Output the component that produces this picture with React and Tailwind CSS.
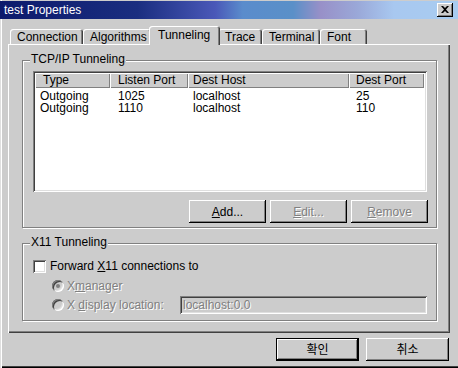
import React from 'react';

const raised = 'shadow-[inset_-1px_-1px_#000,inset_1px_1px_#fff,inset_-2px_-2px_#808080]';
const sunken = 'shadow-[inset_1px_1px_#808080,inset_-1px_-1px_#fff,inset_2px_2px_#404040,inset_-2px_-2px_#dfdfdf]';
const engraved = 'text-[#808080] [text-shadow:1px_1px_0_#fff]';

function Tab({ label, w, selected }) {
  if (selected) {
    return (
      <div
        className={`${w} h-[19px] -mx-[2px] mb-[-1px] relative z-10 bg-[#cccccc] rounded-t-[3px] pl-[9px] pt-[2px] leading-[14px] shadow-[inset_1px_1px_#fff,inset_-1px_0_#404040,inset_-2px_0_#808080]`}
      >
        {label}
      </div>
    );
  }
  return (
    <div
      className={`${w} h-[15px] bg-[#cccccc] rounded-t-[3px] pl-[7px] pt-[1px] leading-[14px] shadow-[inset_1px_1px_#fff,inset_-1px_0_#404040,inset_-2px_0_#808080]`}
    >
      {label}
    </div>
  );
}

function Group({ title, className, children }) {
  return (
    <div className={`relative border border-[#808080] shadow-[inset_1px_1px_#fff,1px_1px_#fff] ${className}`}>
      <span className="absolute left-[7px] top-[-9px] bg-[#cccccc] px-[1px] leading-[14px]">{title}</span>
      {children}
    </div>
  );
}

function Button({ children, disabled, className = '' }) {
  return (
    <div
      className={`w-[77px] h-[23px] flex items-center justify-center bg-[#cccccc] ${raised} ${
        disabled ? engraved : ''
      } ${className}`}
    >
      {children}
    </div>
  );
}

function Radio({ checked }) {
  return (
    <div className="w-[12px] h-[12px] rounded-full bg-[#cccccc] flex items-center justify-center shadow-[inset_1px_1px_#808080,inset_-1px_-1px_#fff,inset_2px_2px_#404040,inset_-2px_-2px_#dfdfdf]">
      {checked && <div className="w-[4px] h-[4px] rounded-full bg-[#808080]" />}
    </div>
  );
}

const tunnels = [
  { type: 'Outgoing', listen: '1025', host: 'localhost', port: '25' },
  { type: 'Outgoing', listen: '1110', host: 'localhost', port: '110' },
];

export default function App() {
  return (
    <div
      className="w-[458px] h-[368px] bg-[#cccccc] text-[12px] text-black overflow-hidden flex flex-col shadow-[inset_1px_0_#dfdfdf,inset_2px_0_#fff,inset_0_-1px_#000,inset_0_-2px_#404040]"
      style={{ fontFamily: '"Liberation Sans", "Noto Sans CJK KR", sans-serif' }}
    >
      {/* Title bar */}
      <div className="mt-[1px] h-[18px] flex items-center justify-between pl-[4px] pr-[5px] bg-[linear-gradient(to_right,#0c1a6c_0%,#1a2e80_30%,#4a58b8_47%,#5a8ccc_53%,#5a90c8_64%,#9890c8_70%,#9aa8d8_78%,#a8c8f0_86%,#a8ccf0_100%)]">
        <span className="text-white leading-[18px]">test Properties</span>
        <div className={`w-[16px] h-[14px] bg-[#cccccc] flex items-center justify-center ${raised}`}>
          <svg width="8" height="7" viewBox="0 0 8 7" className="mb-[1px]">
            <path d="M0 0h2l2 2 2-2h2L5 3.5 8 7H6L4 5 2 7H0l3-3.5z" fill="#000" />
          </svg>
        </div>
      </div>

      {/* Tabs */}
      <div className="mt-[7px] h-[18px] pl-[10px] flex items-end">
        <Tab label="Connection" w="w-[73px]" />
        <Tab label="Algorithms" w="w-[68px]" />
        <Tab label="Tunneling" w="w-[71px]" selected />
        <Tab label="Trace" w="w-[44px]" />
        <Tab label="Terminal" w="w-[58px]" />
        <Tab label="Font" w="w-[47px]" />
      </div>

      {/* Panel */}
      <div className="ml-[8px] w-[442px] h-[289px] pt-[16px] pl-[14px] shadow-[inset_1px_1px_#fff,inset_-1px_-1px_#404040,inset_-2px_-2px_#808080]">
        <Group title="TCP/IP Tunneling" className="w-[415px] h-[168px]">
          <div className={`ml-[10px] mt-[10px] w-[394px] h-[121px] bg-white p-[2px] ${sunken}`}>
            <div className="flex h-[15px] leading-[15px]">
              <div className="w-[75px] pl-[8px] bg-[#cccccc] shadow-[inset_1px_1px_#fff,inset_-1px_-1px_#808080]">Type</div>
              <div className="w-[78px] pl-[8px] bg-[#cccccc] shadow-[inset_1px_1px_#fff,inset_-1px_-1px_#808080]">Listen Port</div>
              <div className="w-[161px] pl-[5px] bg-[#cccccc] shadow-[inset_1px_1px_#fff,inset_-1px_-1px_#808080]">Dest Host</div>
              <div className="w-[75px] pl-[7px] bg-[#cccccc] shadow-[inset_1px_1px_#fff,inset_-1px_-1px_#808080]">Dest Port</div>
            </div>
            <div className="mt-[2px]">
              {tunnels.map((t, i) => (
                <div key={i} className="flex leading-[12px] h-[12px]">
                  <div className="w-[75px] pl-[5px]">{t.type}</div>
                  <div className="w-[78px] pl-[8px]">{t.listen}</div>
                  <div className="w-[161px] pl-[5px]">{t.host}</div>
                  <div className="w-[75px] pl-[7px]">{t.port}</div>
                </div>
              ))}
            </div>
          </div>
          <div className="mt-[8px] pr-[8px] flex justify-end gap-[4px]">
            <Button>
              <span>
                <u>A</u>dd...
              </span>
            </Button>
            <Button disabled>
              <span>
                <u>E</u>dit...
              </span>
            </Button>
            <Button disabled>
              <span>
                <u>R</u>emove
              </span>
            </Button>
          </div>
        </Group>

        <Group title="X11 Tunneling" className="mt-[15px] w-[415px] h-[78px]">
          <div className="ml-[10px] mt-[16px] flex items-center h-[13px]">
            <div className={`w-[13px] h-[13px] bg-white ${sunken}`} />
            <span className="ml-[4px] leading-[13px]">
              Forward <u>X</u>11 connections to
            </span>
          </div>
          <div className="ml-[29px] mt-[7px] flex items-center h-[12px]">
            <Radio checked />
            <span className={`ml-[3px] leading-[12px] ${engraved}`}>
              X<u>m</u>anager
            </span>
          </div>
          <div className="ml-[29px] mt-[3px] flex items-center h-[19px]">
            <Radio />
            <span className={`ml-[3px] w-[113px] leading-[12px] ${engraved}`}>
              X <u>d</u>isplay location:
            </span>
            <div className={`w-[247px] h-[18px] pl-[3px] flex items-center ${sunken} ${engraved}`}>localhost:0.0</div>
          </div>
        </Group>
      </div>

      {/* Dialog buttons */}
      <div className="mt-[5px] pr-[9px] flex justify-end gap-[7px]">
        <div className="w-[83px] h-[23px] border border-black">
          <div className={`w-full h-full flex items-center justify-center ${raised}`}>확인</div>
        </div>
        <div className={`w-[83px] h-[23px] flex items-center justify-center ${raised}`}>취소</div>
      </div>
    </div>
  );
}
